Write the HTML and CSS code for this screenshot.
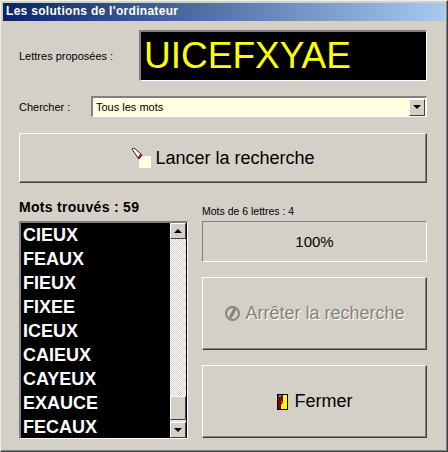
FILE: index.html
```html
<!DOCTYPE html>
<html>

<head>
    <meta charset="UTF-8">
    <title>Les solutions de l'ordinateur</title>
    <link rel="stylesheet" href="styles.css">
</head>

<body>

    <div class="window">
        <div class="titlebar">Les solutions de l'ordinateur</div>
        <div class="content">
            <div class="row-letters">
                <span class="label">Lettres proposées :</span>
                <div class="letters">UICEFXYAE</div>
            </div>
            <div class="row-search">
                <span class="label">Chercher :</span>
                <div class="combo">
                    <span>Tous les mots</span>
                    <div class="sb-btn combo-btn"><i class="arrow-down"></i></div>
                </div>
            </div>
            <div class="button btn-start">
                <svg class="icon" width="20" height="20" viewBox="0 0 20 20">
                    <rect x="8" y="8" width="12" height="12" fill="#ffffe0" />
                    <path d="M1 1 L3 0 L10 6 L7 10 Z" fill="#fff" stroke="#222" stroke-width="1" />
                    <path d="M10 6 L7 10 L8 11 L11 7 Z" fill="#d00000" stroke="#c00000" />
                </svg>
                <span>Lancer la recherche</span>
            </div>
            <div class="columns">
                <div class="col-left">
                    <h3>Mots trouvés : 59</h3>
                    <div class="list">
                        <ul>
                            <li>CIEUX</li>
                            <li>FEAUX</li>
                            <li>FIEUX</li>
                            <li>FIXEE</li>
                            <li>ICEUX</li>
                            <li>CAIEUX</li>
                            <li>CAYEUX</li>
                            <li>EXAUCE</li>
                            <li>FECAUX</li>
                        </ul>
                        <div class="scrollbar">
                            <div class="sb-btn"><i class="arrow-up"></i></div>
                            <div class="sb-track"></div>
                            <div class="sb-btn sb-thumb"></div>
                            <div class="sb-track sb-gap"></div>
                            <div class="sb-btn"><i class="arrow-down"></i></div>
                        </div>
                    </div>
                </div>
                <div class="col-right">
                    <span class="label count">Mots de 6 lettres : 4</span>
                    <div class="progress">100%</div>
                    <div class="button btn-stop disabled">
                        <svg class="icon" width="17" height="17" viewBox="0 0 17 17">
                            <circle cx="8.5" cy="8.5" r="6.5" fill="none" stroke="#85827c" stroke-width="2" />
                            <path d="M11 4 L6 13" stroke="#85827c" stroke-width="3" />
                        </svg>
                        <span>Arrêter la recherche</span>
                    </div>
                    <div class="button btn-close">
                        <svg class="icon" width="11" height="16" viewBox="0 0 11 16">
                            <rect x="0.5" y="0.5" width="10" height="15" fill="#ffff00" stroke="#000" />
                            <path d="M1 1 H6 V8 L4 11 V15 H1 Z" fill="#800000" />
                            <rect x="2" y="1" width="2" height="2" fill="#00c0d0" />
                            <rect x="4" y="7" width="1" height="1" fill="#ffff00" />
                        </svg>
                        <span>Fermer</span>
                    </div>
                </div>
            </div>
        </div>
    </div>

</body>

</html>
```

FILE: styles.css
```css
/* Fenetre facon Windows 2000 */
body {
    margin: 0;
    padding: 0;
    background-color: #d4d0c8;
    font-family: "Liberation Sans", Arial, sans-serif;
}

.window {
    width: 448px;
    height: 452px;
    box-sizing: border-box;
    padding: 3px;
    background-color: #d4d0c8;
    border-top: 1px solid #f2f0ec;
    border-left: 1px solid #f2f0ec;
    border-right: 1px solid #404040;
    border-bottom: 1px solid #404040;
    box-shadow: inset -1px -1px 0 #808080;
}

.titlebar {
    height: 18px;
    margin: -1px -1px 0 -1px;
    padding-left: 3px;
    line-height: 17px;
    font-size: 12px;
    font-weight: bold;
    letter-spacing: 0.3px;
    color: #fff;
    background: linear-gradient(to right, #0a246a, #a6caf0);
}

.content {
    padding: 9px 17px 0 15px;
}

.label {
    font-size: 11px;
    color: #000;
}

.row-letters {
    display: flex;
    align-items: center;
    justify-content: space-between;
}

.letters {
    width: 288px;
    height: 51px;
    box-sizing: border-box;
    padding-left: 3px;
    line-height: 47px;
    font-size: 37px;
    color: #ffff00;
    background-color: #000;
    border-top: 2px solid #808080;
    border-left: 2px solid #808080;
    border-right: 1px solid #fff;
    border-bottom: 1px solid #fff;
}

.row-search {
    display: flex;
    align-items: center;
    justify-content: space-between;
    margin-top: 15px;
}

.combo {
    width: 336px;
    height: 21px;
    box-sizing: border-box;
    display: flex;
    align-items: center;
    justify-content: space-between;
    padding: 0 1px 0 3px;
    font-size: 11px;
    background-color: #ffffe0;
    border-top: 2px solid #808080;
    border-left: 2px solid #808080;
    border-right: 1px solid #fff;
    border-bottom: 1px solid #fff;
}

.button {
    display: flex;
    align-items: center;
    justify-content: center;
    gap: 4px;
    box-sizing: border-box;
    font-size: 18px;
    color: #000;
    background-color: #d4d0c8;
    border-top: 1px solid #fff;
    border-left: 1px solid #fff;
    border-right: 1px solid #404040;
    border-bottom: 1px solid #404040;
    box-shadow: inset -1px -1px 0 #808080;
}

.btn-start {
    height: 50px;
    margin-top: 16px;
}

.disabled {
    color: #85827c;
}

.columns {
    display: flex;
    justify-content: space-between;
    margin-top: 16px;
}

.col-left {
    width: 169px;
}

.col-left h3 {
    margin: 0 0 6px 0;
    height: 16px;
    line-height: 16px;
    font-size: 14px;
    letter-spacing: 0.3px;
}

.list {
    display: flex;
    height: 218px;
    box-sizing: border-box;
    background-color: #000;
    border-top: 2px solid #808080;
    border-left: 2px solid #808080;
    border-right: 1px solid #fff;
    border-bottom: 1px solid #fff;
}

.list ul {
    flex: 1;
    margin: 0;
    padding: 0 0 0 2px;
    list-style: none;
    overflow: hidden;
}

.list li {
    height: 24px;
    line-height: 24px;
    font-size: 18px;
    font-weight: bold;
    color: #fff;
}

.scrollbar {
    display: flex;
    flex-direction: column;
    width: 16px;
    flex-shrink: 0;
    margin-right: 1px;
    background-color: #d4d0c8;
}

.sb-btn {
    display: flex;
    align-items: center;
    justify-content: center;
    width: 16px;
    height: 16px;
    box-sizing: border-box;
    flex-shrink: 0;
    background-color: #d4d0c8;
    border-top: 1px solid #fff;
    border-left: 1px solid #fff;
    border-right: 1px solid #404040;
    border-bottom: 1px solid #404040;
}

.sb-track {
    flex: 1;
    background-color: #ece9e4;
    background-image: repeating-conic-gradient(#d4d0c8 0% 25%, #fff 0% 50%);
    background-size: 2px 2px;
}

.sb-thumb {
    height: 24px;
}

.sb-gap {
    flex: none;
    height: 2px;
}

.arrow-up,
.arrow-down {
    width: 0;
    height: 0;
    border-left: 4px solid transparent;
    border-right: 4px solid transparent;
}

.arrow-up {
    border-bottom: 4px solid #000;
}

.arrow-down {
    border-top: 4px solid #000;
}

.combo-btn {
    width: 16px;
    height: 17px;
}

.col-right {
    width: 225px;
    display: flex;
    flex-direction: column;
}

.count {
    height: 15px;
    line-height: 15px;
    margin-top: 5px;
    margin-bottom: 2px;
    font-size: 10.5px;
}

.progress {
    height: 41px;
    box-sizing: border-box;
    line-height: 39px;
    text-align: center;
    font-size: 15px;
    color: #000;
    border-top: 1px solid #808080;
    border-left: 1px solid #808080;
    border-right: 1px solid #fff;
    border-bottom: 1px solid #fff;
}

.btn-stop {
    height: 73px;
    margin-top: 15px;
    text-shadow: 1px 1px 0 #fff;
}

.btn-close {
    height: 73px;
    margin-top: 15px;
    gap: 7px;
}
```
